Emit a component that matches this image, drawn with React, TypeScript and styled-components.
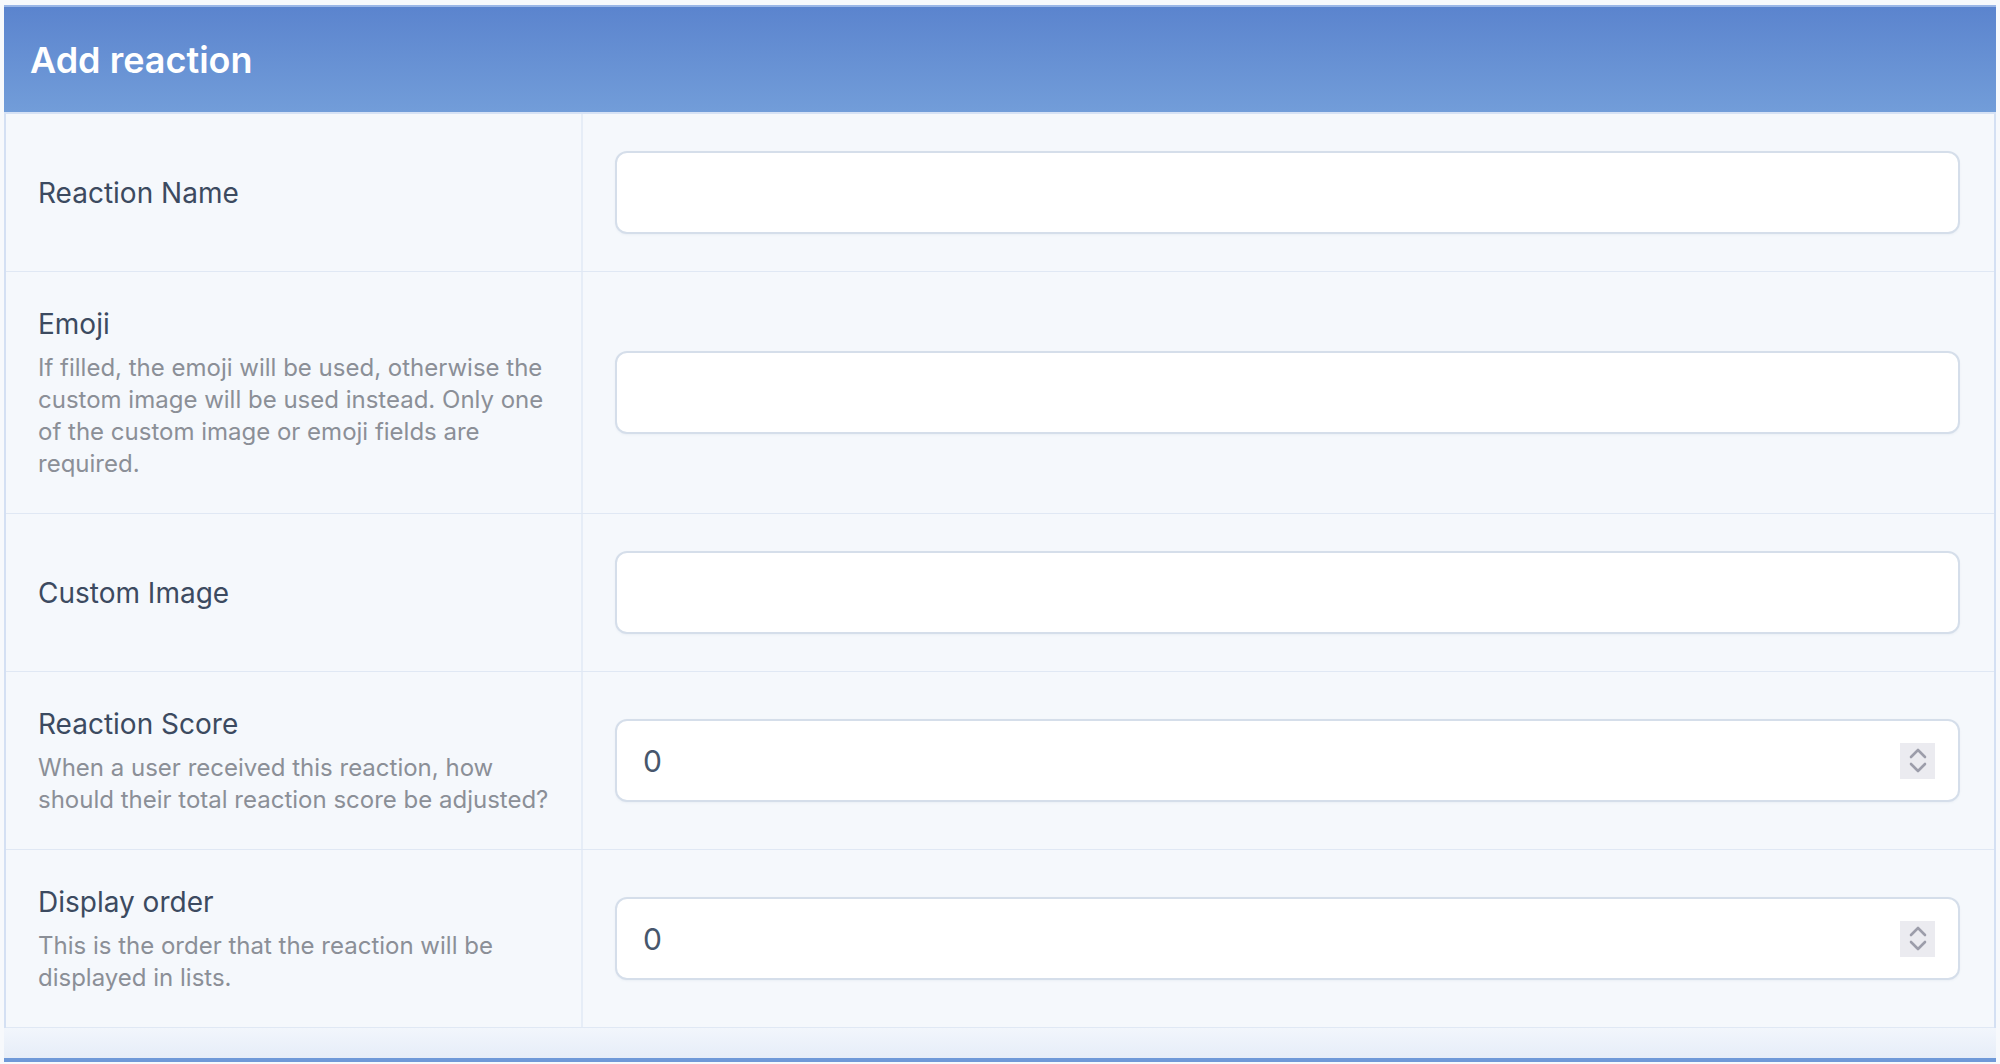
import React from 'react'
import styled, { createGlobalStyle } from 'styled-components'

const GlobalStyle = createGlobalStyle`
  html, body {
    margin: 0;
    padding: 0;
    background: #f7f9fc;
    font-family: Inter, "Noto Sans", "Liberation Sans", sans-serif;
  }
  * {
    box-sizing: border-box;
  }
`

const Page = styled.div`
  padding: 5px 4px 0 4px;
`

const Block = styled.form`
  border-left: 2px solid #d4e0f3;
  border-right: 2px solid #d4e0f3;
  background: #f5f8fc;
`

const Header = styled.h2`
  margin: 0 -2px;
  height: 109px;
  display: flex;
  align-items: center;
  padding: 0 26px;
  border-top: 2px solid #9bb7e7;
  border-bottom: 2px solid #d6e2f5;
  background: linear-gradient(to bottom, #5b84ce, #729dd9);
  color: #ffffff;
  font-size: 36px;
  font-weight: 600;
`

const Row = styled.div`
  display: flex;
  border-bottom: 1px solid #e0e8f4;
`

const LabelCell = styled.dt`
  width: 577px;
  flex: none;
  margin: 0;
  padding: 33px 32px;
  display: flex;
  flex-direction: column;
  justify-content: center;
  border-right: 2px solid #e6edf7;
`

const Label = styled.label`
  color: #3c4a60;
  font-size: 28px;
  line-height: 38px;
`

const Explain = styled.div`
  margin-top: 9px;
  color: #8b8f97;
  font-size: 24px;
  line-height: 32px;
`

const FieldCell = styled.dd`
  flex: 1;
  margin: 0;
  padding: 37px 34px 37px 32px;
  display: flex;
  align-items: center;
`

const InputBox = styled.div`
  flex: 1;
  height: 83px;
  display: flex;
  align-items: center;
  padding: 0 23px 0 24px;
  background: #ffffff;
  border: 2px solid #d5deea;
  border-radius: 12px;
  box-shadow: 0 1px 2px rgba(120, 140, 170, 0.08);
`

const TextInput = styled.input`
  flex: 1;
  min-width: 0;
  border: none;
  outline: none;
  background: transparent;
  color: #47566c;
  font-family: inherit;
  font-size: 30px;
`

const Spinner = styled.span`
  width: 35px;
  height: 36px;
  display: flex;
  flex-direction: column;
  align-items: center;
  justify-content: center;
  gap: 3px;
  background: #ebebf0;
`

const Footer = styled.div`
  height: 34px;
  background: linear-gradient(to bottom, #f2f6fc, #e6edf8);
  border-bottom: 4px solid #6f99d8;
  margin: 0 -2px;
`

const Chevron = ({ up }: { up?: boolean }) => (
  <svg width="18" height="11" viewBox="0 0 18 11">
    <path
      d={up ? 'M2 9 L9 2 L16 9' : 'M2 2 L9 9 L16 2'}
      fill="none"
      stroke="#9c9daa"
      strokeWidth="2.6"
      strokeLinecap="round"
      strokeLinejoin="round"
    />
  </svg>
)

type Field = {
  label: string
  explain?: string
  value?: string
  number?: boolean
}

const fields: Field[] = [
  { label: 'Reaction Name' },
  {
    label: 'Emoji',
    explain:
      'If filled, the emoji will be used, otherwise the custom image will be used instead. Only one of the custom image or emoji fields are required.',
  },
  { label: 'Custom Image' },
  {
    label: 'Reaction Score',
    explain: 'When a user received this reaction, how should their total reaction score be adjusted?',
    value: '0',
    number: true,
  },
  {
    label: 'Display order',
    explain: 'This is the order that the reaction will be displayed in lists.',
    value: '0',
    number: true,
  },
]

const App = () => {
  return (
    <Page>
      <GlobalStyle />
      <Block onSubmit={(e) => e.preventDefault()}>
        <Header>Add reaction</Header>
        {fields.map((f) => (
          <Row key={f.label}>
            <LabelCell>
              <Label>{f.label}</Label>
              {f.explain && <Explain>{f.explain}</Explain>}
            </LabelCell>
            <FieldCell>
              <InputBox>
                <TextInput defaultValue={f.value ?? ''} />
                {f.number && (
                  <Spinner>
                    <Chevron up />
                    <Chevron />
                  </Spinner>
                )}
              </InputBox>
            </FieldCell>
          </Row>
        ))}
        <Footer />
      </Block>
    </Page>
  )
}

export default App
